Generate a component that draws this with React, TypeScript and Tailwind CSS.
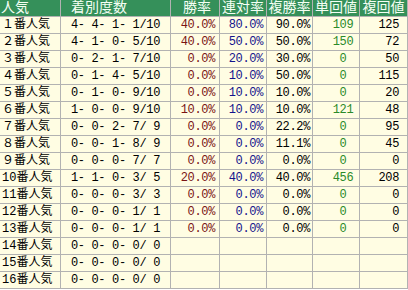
import React from "react";

type Row = {
  rank: string;
  record: string;
  win?: string;
  rentai?: string;
  fukusho?: string;
  tan?: string;
  fuku?: string;
};

const rows: Row[] = [
  { rank: "１番人気", record: "4- 4- 1- 1/10", win: "40.0%", rentai: "80.0%", fukusho: "90.0%", tan: "109", fuku: "125" },
  { rank: "２番人気", record: "4- 1- 0- 5/10", win: "40.0%", rentai: "50.0%", fukusho: "50.0%", tan: "150", fuku: "72" },
  { rank: "３番人気", record: "0- 2- 1- 7/10", win: "0.0%", rentai: "20.0%", fukusho: "30.0%", tan: "0", fuku: "50" },
  { rank: "４番人気", record: "0- 1- 4- 5/10", win: "0.0%", rentai: "10.0%", fukusho: "50.0%", tan: "0", fuku: "115" },
  { rank: "５番人気", record: "0- 1- 0- 9/10", win: "0.0%", rentai: "10.0%", fukusho: "10.0%", tan: "0", fuku: "20" },
  { rank: "６番人気", record: "1- 0- 0- 9/10", win: "10.0%", rentai: "10.0%", fukusho: "10.0%", tan: "121", fuku: "48" },
  { rank: "７番人気", record: "0- 0- 2- 7/ 9", win: "0.0%", rentai: "0.0%", fukusho: "22.2%", tan: "0", fuku: "95" },
  { rank: "８番人気", record: "0- 0- 1- 8/ 9", win: "0.0%", rentai: "0.0%", fukusho: "11.1%", tan: "0", fuku: "45" },
  { rank: "９番人気", record: "0- 0- 0- 7/ 7", win: "0.0%", rentai: "0.0%", fukusho: "0.0%", tan: "0", fuku: "0" },
  { rank: "10番人気", record: "1- 1- 0- 3/ 5", win: "20.0%", rentai: "40.0%", fukusho: "40.0%", tan: "456", fuku: "208" },
  { rank: "11番人気", record: "0- 0- 0- 3/ 3", win: "0.0%", rentai: "0.0%", fukusho: "0.0%", tan: "0", fuku: "0" },
  { rank: "12番人気", record: "0- 0- 0- 1/ 1", win: "0.0%", rentai: "0.0%", fukusho: "0.0%", tan: "0", fuku: "0" },
  { rank: "13番人気", record: "0- 0- 0- 1/ 1", win: "0.0%", rentai: "0.0%", fukusho: "0.0%", tan: "0", fuku: "0" },
  { rank: "14番人気", record: "0- 0- 0- 0/ 0" },
  { rank: "15番人気", record: "0- 0- 0- 0/ 0" },
  { rank: "16番人気", record: "0- 0- 0- 0/ 0" },
];

const head = "bg-[#35905a] text-[#f4fff4] text-[14px] leading-[16px] h-4 whitespace-nowrap";
const cell = "bg-[#fffde3] h-4 text-[12px] tracking-[-0.35px] leading-[16px] whitespace-pre";

export default function App() {
  return (
    <div
      className="w-[408px] h-[290px] bg-white"
      style={{ fontFamily: '"Liberation Mono", "Noto Sans CJK JP", monospace' }}
    >
      <div className="grid grid-cols-[60px_109px_48px_46px_45px_46px_47px] gap-px bg-[#b2b2b2] pr-px pb-px">
        <div className={`${head} pl-[1px]`}>人気</div>
        <div className={`${head} pl-[10px]`}>着別度数</div>
        <div className={`${head} text-center pl-[4px]`}>勝率</div>
        <div className={`${head} text-center`}>連対率</div>
        <div className={`${head} text-center`}>複勝率</div>
        <div className={`${head} text-center`}>単回値</div>
        <div className={`${head} text-center`}>複回値</div>

        {rows.map((r) => (
          <React.Fragment key={r.rank}>
            <div className={`${cell} pl-[2px] tracking-normal text-black`}>{r.rank}</div>
            <div className={`${cell} text-center text-black`}>{r.record}</div>
            <div className={`${cell} text-right pr-[4px] text-[#7a1414]`}>{r.win}</div>
            <div className={`${cell} text-right pr-[3px] text-[#14148c]`}>{r.rentai}</div>
            <div className={`${cell} text-right pr-[2px] text-black`}>{r.fukusho}</div>
            <div className={`${cell} text-center pl-[14px] text-[#2a8a2a]`}>{r.tan}</div>
            <div className={`${cell} text-right pr-[8px] text-black`}>{r.fuku}</div>
          </React.Fragment>
        ))}
      </div>
    </div>
  );
}
